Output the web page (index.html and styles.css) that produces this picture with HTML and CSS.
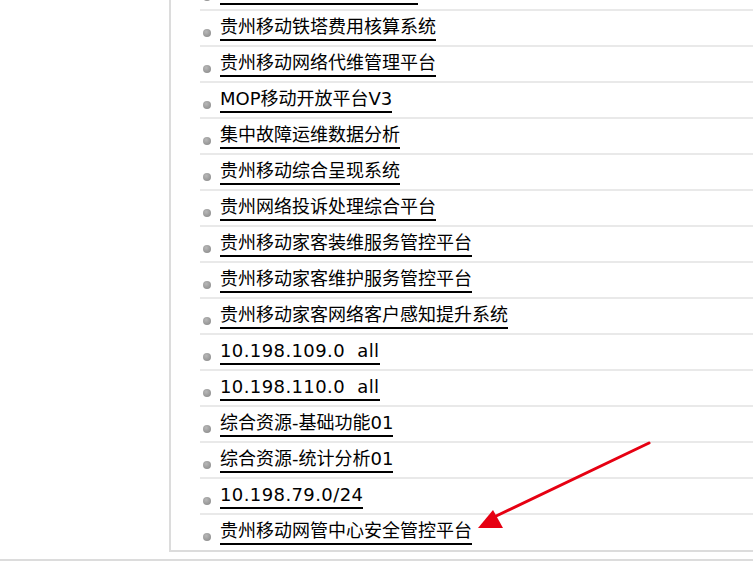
FILE: index.html
```html
<!DOCTYPE html>
<html lang="zh-CN">
<head>
<meta charset="utf-8">
<title>系统列表</title>
<link rel="stylesheet" href="styles.css">
</head>
<body>
<div class="panel">
  <ul class="sys-list">
    <li><span class="dot"></span><a href="#">贵州移动传输网管理系统</a></li>
    <li><span class="dot"></span><a href="#">贵州移动铁塔费用核算系统</a></li>
    <li><span class="dot"></span><a href="#">贵州移动网络代维管理平台</a></li>
    <li><span class="dot"></span><a href="#">MOP移动开放平台V3</a></li>
    <li><span class="dot"></span><a href="#">集中故障运维数据分析</a></li>
    <li><span class="dot"></span><a href="#">贵州移动综合呈现系统</a></li>
    <li><span class="dot"></span><a href="#">贵州网络投诉处理综合平台</a></li>
    <li><span class="dot"></span><a href="#">贵州移动家客装维服务管控平台</a></li>
    <li><span class="dot"></span><a href="#">贵州移动家客维护服务管控平台</a></li>
    <li><span class="dot"></span><a href="#">贵州移动家客网络客户感知提升系统</a></li>
    <li><span class="dot"></span><a href="#" class="latin">10.198.109.0&nbsp; all</a></li>
    <li><span class="dot"></span><a href="#" class="latin">10.198.110.0&nbsp; all</a></li>
    <li><span class="dot"></span><a href="#">综合资源-基础功能01</a></li>
    <li><span class="dot"></span><a href="#">综合资源-统计分析01</a></li>
    <li><span class="dot"></span><a href="#" class="latin">10.198.79.0/24</a></li>
    <li><span class="dot"></span><a href="#">贵州移动网管中心安全管控平台</a></li>
  </ul>
</div>
<div class="footer-line"></div>
<svg class="arrow" width="753" height="563" viewBox="0 0 753 563" aria-hidden="true">
  <line x1="649" y1="443" x2="492" y2="518" stroke="#e60012" stroke-width="3" stroke-linecap="round"/>
  <polygon points="478,528 493,510 503,528" fill="#e60012"/>
</svg>
</body>
</html>
```
FILE: styles.css
```css
html, body {
  margin: 0;
  padding: 0;
  background: #ffffff;
}

body {
  font-family: "DejaVu Sans", "Noto Sans CJK SC", sans-serif;
  color: #000;
  position: relative;
  width: 753px;
  height: 563px;
  overflow: hidden;
}

.panel {
  margin-left: 169px;
  height: 550px;
  border-left: 2px solid #dcdcdc;
  border-bottom: 2px solid #dcdcdc;
  overflow: hidden;
}

.sys-list {
  list-style: none;
  margin: -25px 0 0 0;
  padding: 0;
}

.sys-list li {
  margin-left: 29px;
  height: 34px;
  border-bottom: 2px solid #e9e9e9;
  display: flex;
  align-items: flex-start;
  padding-left: 3px;
}

.sys-list li:last-child {
  border-bottom: none;
  height: 36px;
}

.dot {
  flex: none;
  width: 8px;
  height: 8px;
  border-radius: 50%;
  margin-top: 18px;
  margin-right: 9px;
  background: radial-gradient(circle at 40% 35%, #b8b8b8, #858585);
}

.sys-list a {
  display: inline-block;
  margin-top: 5px;
  font-size: 18px;
  line-height: 22px;
  padding-bottom: 1px;
  border-bottom: 2px solid #000;
  color: #000;
  text-decoration: none;
  white-space: nowrap;
}

.sys-list a.latin {
  letter-spacing: 0.4px;
}

.footer-line {
  margin-top: 7px;
  border-top: 2px solid #dcdcdc;
}

.arrow {
  position: absolute;
  left: 0;
  top: 0;
  pointer-events: none;
}
```
